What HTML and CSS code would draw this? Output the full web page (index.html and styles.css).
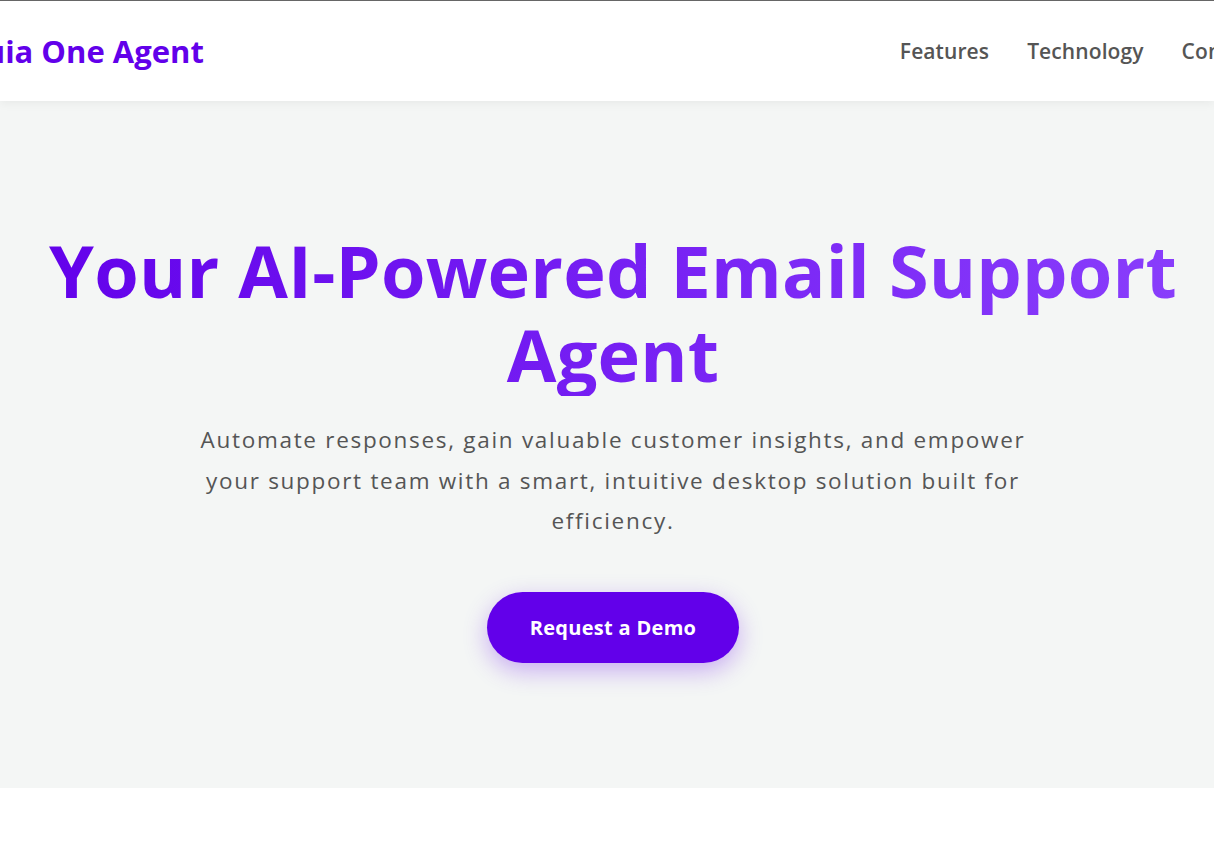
FILE: index.html
```html
<!DOCTYPE html>
<html lang="en">
<head>
<meta charset="utf-8">
<title>Anuia One Agent</title>
<link rel="stylesheet" href="styles.css">
</head>
<body>
<header class="site-header">
  <div class="header-inner">
    <a class="logo" href="#">Anuia One Agent</a>
    <nav class="nav">
      <a href="#features">Features</a>
      <a href="#technology">Technology</a>
      <a href="#contact">Contact</a>
    </nav>
  </div>
</header>
<main>
  <section class="hero">
    <h1 class="hero-title">Your AI-Powered Email Support Agent</h1>
    <p class="hero-text">Automate responses, gain valuable customer insights, and empower your support team with a smart, intuitive desktop solution built for efficiency.</p>
    <a class="btn-primary" href="#demo">Request a Demo</a>
  </section>
</main>
</body>
</html>
```
FILE: styles.css
```css
* { box-sizing: border-box; }
html, body { margin: 0; padding: 0; }
body {
  font-family: "Open Sans", "DejaVu Sans", sans-serif;
  background: #ffffff;
  color: #333;
  overflow-x: hidden;
}
a { text-decoration: none; }

.site-header {
  border-top: 1px solid #666;
  background: #fff;
  height: 101px;
  overflow: hidden;
  box-shadow: 0 2px 10px rgba(0,0,0,0.06);
  position: relative;
  z-index: 2;
}
.header-inner {
  height: 100%;
  display: flex;
  align-items: center;
  justify-content: space-between;
  margin-left: -57px;
  margin-right: -47px;
}
.logo {
  color: #6200ea;
  font-weight: 700;
  font-size: 31px;
}
.nav {
  display: flex;
  gap: 38px;
}
.nav a {
  color: #555;
  font-weight: 600;
  font-size: 21px;
  letter-spacing: 0.1px;
}

.hero {
  background: #f4f6f5;
  height: 687px;
  display: flex;
  flex-direction: column;
  align-items: center;
  padding: 127px 0 0 12px;
  text-align: center;
}
.hero-title {
  margin: 0;
  font-size: 72px;
  line-height: 84px;
  font-weight: 700;
  letter-spacing: 0.2px;
  width: 100%;
  background: linear-gradient(90deg, #6200ea 0%, #8a3ffc 100%);
  -webkit-background-clip: text;
  background-clip: text;
  color: transparent;
}
.hero-text {
  margin: 24px 0 0;
  max-width: 860px;
  font-size: 22.5px;
  letter-spacing: 1.7px;
  line-height: 40.5px;
  color: #555;
}
.btn-primary {
  margin-top: 50px;
  display: inline-flex;
  align-items: center;
  justify-content: center;
  width: 252px;
  height: 71px;
  border-radius: 36px;
  background: #6200ea;
  color: #fff;
  font-weight: 700;
  font-size: 20px;
  letter-spacing: 0.3px;
  box-shadow: 0 8px 24px rgba(98, 0, 234, 0.3);
}
```
